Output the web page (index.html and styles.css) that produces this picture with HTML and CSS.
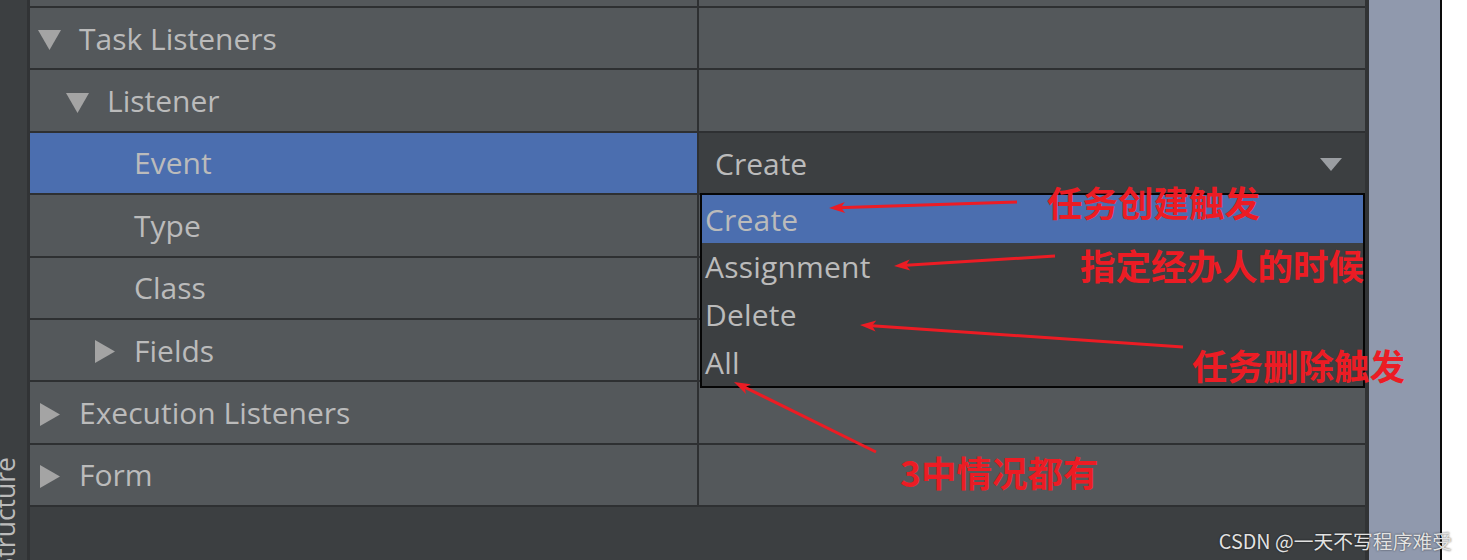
FILE: index.html
```html
<!DOCTYPE html>
<html lang="zh">
<head>
<meta charset="utf-8">
<title>Properties – Task Listeners</title>
<link rel="stylesheet" href="styles.css">
</head>
<body>
<div class="screen">
  <aside class="toolstrip"><span class="toolstrip-label">Structure</span></aside>

  <main class="props">
    <div class="row row-partial"><div class="name"></div><div class="value"></div></div>

    <div class="row">
      <div class="name lvl0">
        <span class="toggle"><svg class="tri tri-down" width="23" height="20" viewBox="0 0 23 20"><polygon points="0,0 23,0 11.5,20"/></svg></span>
        <span class="label">Task Listeners</span>
      </div>
      <div class="value"></div>
    </div>

    <div class="row">
      <div class="name lvl1">
        <span class="toggle"><svg class="tri tri-down" width="23" height="20" viewBox="0 0 23 20"><polygon points="0,0 23,0 11.5,20"/></svg></span>
        <span class="label">Listener</span>
      </div>
      <div class="value"></div>
    </div>

    <div class="row row-event">
      <div class="name lvl2 selected">
        <span class="toggle"></span>
        <span class="label">Event</span>
      </div>
      <div class="value editor">
        <span class="editor-text">Create</span>
        <svg class="combo-arrow" width="22" height="13" viewBox="0 0 22 13"><polygon points="0,0 22,0 11,13"/></svg>
        <ul class="popup">
          <li class="option active">Create</li>
          <li class="option">Assignment</li>
          <li class="option">Delete</li>
          <li class="option">All</li>
        </ul>
      </div>
    </div>

    <div class="row">
      <div class="name lvl2"><span class="toggle"></span><span class="label">Type</span></div>
      <div class="value"></div>
    </div>

    <div class="row">
      <div class="name lvl2"><span class="toggle"></span><span class="label">Class</span></div>
      <div class="value"></div>
    </div>

    <div class="row">
      <div class="name lvl2">
        <span class="toggle"><svg class="tri tri-right" width="20" height="23" viewBox="0 0 20 23"><polygon points="0,0 20,11.5 0,23"/></svg></span>
        <span class="label">Fields</span>
      </div>
      <div class="value"></div>
    </div>

    <div class="row">
      <div class="name lvl0">
        <span class="toggle"><svg class="tri tri-right" width="20" height="23" viewBox="0 0 20 23"><polygon points="0,0 20,11.5 0,23"/></svg></span>
        <span class="label">Execution Listeners</span>
      </div>
      <div class="value"></div>
    </div>

    <div class="row">
      <div class="name lvl0">
        <span class="toggle"><svg class="tri tri-right" width="20" height="23" viewBox="0 0 20 23"><polygon points="0,0 20,11.5 0,23"/></svg></span>
        <span class="label">Form</span>
      </div>
      <div class="value"></div>
    </div>
  </main>

  <div class="gutter"></div>
  <div class="edge"></div>
</div>

<svg class="arrows" width="1467" height="560" viewBox="0 0 1467 560">
  <g class="arrow">
    <line x1="1017" y1="202" x2="837" y2="207.7"/>
    <path transform="translate(829 208) rotate(-1.83)" d="M0,0 L16,-5.5 L12,0 L16,5.5 Z"/>
  </g>
  <g class="arrow">
    <line x1="1055" y1="256" x2="902" y2="265.5"/>
    <path transform="translate(894 266) rotate(-3.55)" d="M0,0 L16,-5.5 L12,0 L16,5.5 Z"/>
  </g>
  <g class="arrow">
    <line x1="1183" y1="347" x2="868" y2="325.5"/>
    <path transform="translate(860 325) rotate(3.9)" d="M0,0 L16,-5.5 L12,0 L16,5.5 Z"/>
  </g>
  <g class="arrow">
    <line x1="876" y1="452" x2="741.2" y2="385.5"/>
    <path transform="translate(734 382) rotate(26.24)" d="M0,0 L16,-5.5 L12,0 L16,5.5 Z"/>
  </g>
</svg>

<span class="note note-create">任务创建触发</span>
<span class="note note-assign">指定经办人的时候</span>
<span class="note note-delete">任务删除触发</span>
<span class="note note-all">3中情况都有</span>

<span class="watermark">CSDN @一天不写程序难受</span>
</body>
</html>
```

FILE: styles.css
```css
* { box-sizing: border-box; }

html, body { margin: 0; padding: 0; }

body {
  position: relative;
  width: 1467px;
  height: 560px;
  overflow: hidden;
  background: #ffffff;
  font-family: "Open Sans", "Noto Sans", sans-serif;
  color: #bbbbbb;
}

.screen {
  display: flex;
  height: 560px;
}

/* left tool window strip */
.toolstrip {
  flex: none;
  width: 30px;
  background: #3c3f41;
  border-right: 3px solid #313335;
  display: flex;
  flex-direction: column;
  justify-content: flex-end;
  align-items: flex-start;
  overflow: hidden;
}

.toolstrip-label {
  writing-mode: vertical-rl;
  transform: rotate(180deg);
  font-size: 26.5px;
  line-height: 26px;
  color: #bbbbbb;
  white-space: nowrap;
  margin-left: -8px;
  margin-bottom: -12px;
}

/* properties table */
.props {
  flex: none;
  width: 1339px;
  background: #3c3f41;
  border-right: 4px solid #313335;
  display: flex;
  flex-direction: column;
}

.row {
  flex: none;
  display: flex;
  height: 62.4px;
  border-bottom: 2px solid #2e3032;
  background: #54585b;
}

.row-partial { height: 8px; }

.name {
  flex: none;
  width: 669px;
  border-right: 2px solid #2e3032;
  display: flex;
  align-items: center;
  font-size: 30px;
}

.name.lvl0 { padding-left: 8px; }
.name.lvl1 { padding-left: 36px; }
.name.lvl2 { padding-left: 63px; }

.name.selected { background: #4b6eaf; }

.toggle {
  flex: none;
  width: 41px;
  display: flex;
  align-items: center;
}

.tri {
  display: block;
  fill: #a4a4a4;
}

.tri-down { margin-top: 4px; }
.tri-right { margin-top: 3px; margin-left: 2px; }

.label { white-space: nowrap; }

.value {
  flex: 1;
  position: relative;
  display: flex;
  align-items: center;
}

.value.editor {
  background: #3c3f41;
  justify-content: space-between;
  padding: 0 23px 0 16px;
  font-size: 30px;
}

.editor-text { margin-top: 2px; }

.combo-arrow {
  display: block;
  fill: #9b9ea2;
  margin-top: 3px;
}

/* dropdown list */
.popup {
  position: absolute;
  left: 1px;
  top: 100%;
  z-index: 2;
  width: 665px;
  height: 195px;
  margin: 0;
  padding: 0;
  list-style: none;
  background: #3c3f41;
  border: 2px solid #060606;
}

.option {
  height: 47.75px;
  display: flex;
  align-items: center;
  padding-left: 3px;
  font-size: 30px;
  letter-spacing: 0.2px;
  color: #bbbbbb;
}

.option.active { background: #4b6eaf; }

.gutter {
  flex: none;
  width: 71px;
  background: #9099ad;
}

.edge {
  flex: none;
  width: 2px;
  background: #0a0a0a;
}

/* red annotations drawn over the screenshot */
.arrows {
  position: absolute;
  left: 0;
  top: 0;
  z-index: 5;
  pointer-events: none;
}

.arrow line {
  stroke: #ec1c24;
  stroke-width: 3;
}

.arrow path { fill: #ec1c24; }

.note {
  position: absolute;
  z-index: 6;
  font-family: "Noto Sans CJK SC", sans-serif;
  font-weight: 700;
  font-size: 35.5px;
  line-height: 35px;
  color: #ec1c24;
  white-space: nowrap;
}

.note-create { left: 1047px; top: 184px; }
.note-assign { left: 1080px; top: 247px; }
.note-delete { left: 1192px; top: 347px; }
.note-all    { left: 900px;  top: 454px; }

.watermark {
  position: absolute;
  z-index: 6;
  right: 15px;
  top: 530px;
  font-family: "Noto Sans CJK SC", sans-serif;
  font-size: 19.8px;
  line-height: 21px;
  color: #e2e2e2;
  white-space: nowrap;
  text-shadow: 0 0 2px rgba(0, 0, 0, 0.7);
}
```
